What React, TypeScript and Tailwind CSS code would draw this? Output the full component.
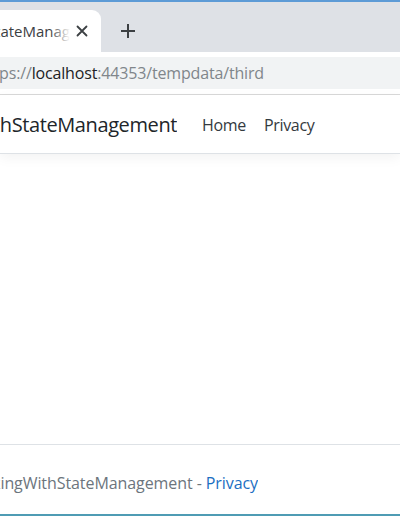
export default function App() {
  const font = { fontFamily: '"Open Sans", "Noto Sans", sans-serif' };
  return (
    <div className="w-[400px] h-[516px] flex flex-col bg-white overflow-hidden" style={font}>
      {/* window top edge */}
      <div className="h-[2px] bg-[#5d9bd6]" />

      {/* tab strip */}
      <div className="h-[50px] bg-[#dee1e6] flex items-end">
        <div className="relative w-[101px] h-[42px] bg-white rounded-tr-[9px] flex items-center">
          <div className="w-[70px] overflow-hidden flex justify-end whitespace-nowrap text-[15px] text-[#3c4043]">
            <span>WorkingWithStateManag</span>
          </div>
          <div className="absolute left-[50px] top-0 w-[20px] h-full bg-gradient-to-r from-white/0 to-white" />
          <svg className="ml-[6px]" width="12" height="12" viewBox="0 0 12 12">
            <path d="M1.5 1.5 L10.5 10.5 M10.5 1.5 L1.5 10.5" stroke="#3c4043" strokeWidth="1.8" strokeLinecap="round" />
          </svg>
        </div>
        <div className="h-[42px] flex items-center ml-[19px]">
          <svg width="16" height="16" viewBox="0 0 16 16">
            <path d="M8 1 V15 M1 8 H15" stroke="#3c4043" strokeWidth="2" />
          </svg>
        </div>
      </div>

      {/* toolbar */}
      <div className="h-[43px] bg-white flex items-center border-b border-[#d9d9d9]">
        <div className="h-[32px] w-full bg-[#f1f3f4] flex items-center">
          <div className="w-[264px] overflow-hidden flex justify-end whitespace-nowrap text-[16px] text-[#80868b] tracking-[-0.01em]">
            <span>
              https://<span className="text-[#202124]">localhost</span>:44353/tempdata/third
            </span>
          </div>
        </div>
      </div>

      {/* navbar */}
      <div className="h-[59px] bg-white border-b border-[#dee2e6] shadow-[0_4px_12px_rgba(0,0,0,0.05)] flex items-center pt-[2px]">
        <div className="w-[177px] overflow-hidden flex justify-end whitespace-nowrap text-[20px] text-[#212529] tracking-[-0.02em]">
          <span>WorkingWithStateManagement</span>
        </div>
        <div className="flex items-center gap-[18px] ml-[25px] text-[16px] text-[#343a40] tracking-[-0.02em]">
          <span>Home</span>
          <span>Privacy</span>
        </div>
      </div>

      {/* main */}
      <div className="flex-1" />

      {/* footer */}
      <div className="h-[70px] border-t border-[#dee2e6] pt-[26px]">
        <div className="w-[258px] overflow-hidden flex justify-end whitespace-nowrap text-[16px] leading-[24px] text-[#6c757d] tracking-[-0.005em]">
          <span>
            &copy; 2020 - WorkingWithStateManagement - <span className="text-[#1b6ec2]">Privacy</span>
          </span>
        </div>
      </div>
      <div className="h-[2px] bg-[#4f9cb4]" />
    </div>
  );
}
